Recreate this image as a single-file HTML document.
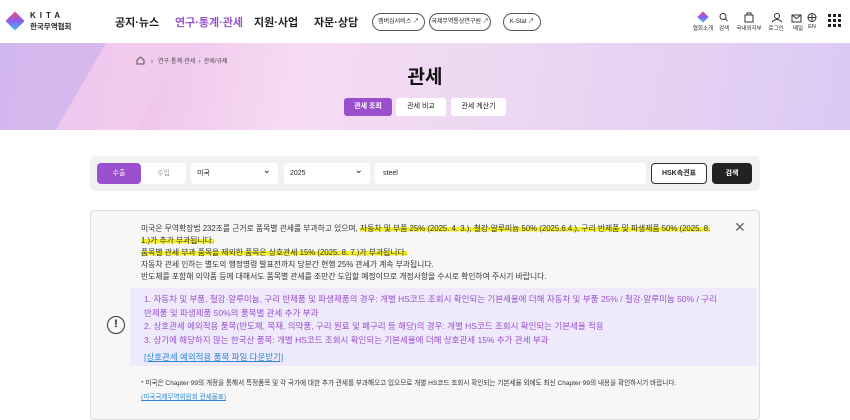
<!DOCTYPE html><html><head><meta charset="utf-8"><style>
*{margin:0;padding:0;box-sizing:border-box}
body{width:850px;height:410px;overflow:hidden;background:#fff;font-family:"Liberation Sans","Noto Sans CJK KR",sans-serif;color:#222;position:relative}
.a{position:absolute;white-space:nowrap}
.hl{background:linear-gradient(transparent 35%,#f5ef2a 35%,#f5ef2a 85%,transparent 85%)}
.pill{position:absolute;top:13px;height:18px;border:1px solid #555;border-radius:9px;font-size:6px;line-height:16px;text-align:center}
.ic{position:absolute;top:24px;font-size:5.5px;text-align:center;width:30px}
</style></head><body>
<!-- header -->
<div class="a" style="left:6px;top:12px;width:18px;height:18px;background:linear-gradient(135deg,#f34b7a,#8a5cf0 50%,#2fc6f0);transform:rotate(45deg) scale(.75)"></div>
<div class="a" style="left:30px;top:11px;font-size:8px;font-weight:bold;letter-spacing:4px">KITA</div>
<div class="a" style="left:30px;top:21px;font-size:7.5px;font-weight:bold">한국무역협회</div>
<div class="a" style="left:115px;top:14px;font-size:11px;font-weight:bold">공지·뉴스</div>
<div class="a" style="left:175px;top:14px;font-size:11px;font-weight:bold;color:#9a53cf">연구·통계·관세</div>
<div class="a" style="left:254px;top:14px;font-size:11px;font-weight:bold">지원·사업</div>
<div class="a" style="left:314px;top:14px;font-size:11px;font-weight:bold">자문·상담</div>
<div class="pill" style="left:372px;width:53px">멤버십서비스 ↗</div>
<div class="pill" style="left:429px;width:62px">국제무역통상연구원 ↗</div>
<div class="pill" style="left:503px;width:38px">K-Stat ↗</div>
<div class="a" style="left:699px;top:13px;width:8px;height:8px;background:linear-gradient(135deg,#f34b7a,#8a5cf0,#2fc6f0);transform:rotate(45deg)"></div>
<svg class="a" style="left:718px;top:12px" width="100" height="12" fill="none" stroke="#333" stroke-width="1">
<circle cx="5" cy="4.5" r="3"/><line x1="7.2" y1="6.7" x2="9.5" y2="9"/>
<rect x="27" y="3" width="8" height="7"/><path d="M29 3v-2h4v2"/>
<circle cx="59" cy="4" r="2.5"/><path d="M54 10q5-5 10 0"/>
<rect x="74" y="3" width="9" height="7"/><path d="M74 3l4.5 3.5 4.5-3.5"/>
<circle cx="94" cy="5.5" r="4"/><path d="M90 5.5h8M94 1.5v8"/></svg>
<div class="ic" style="left:688px">협회소개</div><div class="ic" style="left:709px">검색</div><div class="ic" style="left:734px">국내외지부</div><div class="ic" style="left:761px">로그인</div><div class="ic" style="left:783px">메일</div><div class="ic" style="left:797px">EN</div>
<svg class="a" style="left:828px;top:14px" width="14" height="14" fill="#222"><rect x="0" y="0" width="3" height="3"/><rect x="5" y="0" width="3" height="3"/><rect x="10" y="0" width="3" height="3"/><rect x="0" y="5" width="3" height="3"/><rect x="5" y="5" width="3" height="3"/><rect x="10" y="5" width="3" height="3"/><rect x="0" y="10" width="3" height="3"/><rect x="5" y="10" width="3" height="3"/><rect x="10" y="10" width="3" height="3"/></svg>
<!-- banner -->
<div class="a" style="left:0;top:43px;width:850px;height:87px;background:linear-gradient(100deg,#d9bdf0 0%,#f0c6ec 18%,#f6dbf2 35%,#ecd8f2 60%,#dcc9f4 100%);overflow:hidden">
<div style="position:absolute;left:-30px;top:0;width:110px;height:90px;background:#cfb3ec;transform:skewX(-30deg);opacity:.7"></div>
<div style="position:absolute;left:80px;top:0;width:80px;height:90px;background:#f3cdec;transform:skewX(-30deg);opacity:.6"></div></div>
<svg class="a" style="left:136px;top:56px" width="9" height="9" fill="none" stroke="#555"><path d="M1 4l3.5-3 3.5 3v4h-7z"/></svg>
<div class="a" style="left:151px;top:56px;font-size:6px;color:#444">›&nbsp;&nbsp; 연구·통계·관세 &nbsp;›&nbsp; 관세/규제</div>
<div class="a" style="left:380px;top:62px;width:90px;text-align:center;font-size:19px;font-weight:bold;color:#111">관세</div>
<div class="a" style="left:344px;top:98px;width:48px;height:18px;background:#9a4fcf;color:#fff;border-radius:3px;font-size:7px;line-height:18px;text-align:center;font-weight:bold">관세 조회</div>
<div class="a" style="left:396px;top:98px;width:50px;height:18px;background:#fff;border-radius:3px;font-size:7px;line-height:18px;text-align:center">관세 비교</div>
<div class="a" style="left:451px;top:98px;width:55px;height:18px;background:#fff;border-radius:3px;font-size:7px;line-height:18px;text-align:center">관세 계산기</div>
<!-- search -->
<div class="a" style="left:90px;top:156px;width:670px;height:35px;background:#f1f1f3;border-radius:5px"></div>
<div class="a" style="left:97px;top:163px;width:89px;height:21px;background:#fff;border-radius:4px"></div>
<div class="a" style="left:97px;top:163px;width:44px;height:21px;background:#9a4fcf;border-radius:4px;color:#fff;font-size:7px;line-height:21px;text-align:center">수출</div>
<div class="a" style="left:141px;top:163px;width:45px;font-size:7px;line-height:21px;text-align:center;color:#999">수입</div>
<div class="a" style="left:191px;top:163px;width:87px;height:21px;background:#fff;border-radius:3px;font-size:7px;line-height:21px;padding-left:6px">미국<span style="position:absolute;right:7px;top:-3px;font-size:10px">⌄</span></div>
<div class="a" style="left:284px;top:163px;width:86px;height:21px;background:#fff;border-radius:3px;font-size:7px;line-height:21px;padding-left:6px">2025<span style="position:absolute;right:7px;top:-3px;font-size:10px">⌄</span></div>
<div class="a" style="left:375px;top:163px;width:271px;height:21px;background:#fff;border-radius:3px;font-size:7px;line-height:21px;padding-left:8px">steel</div>
<div class="a" style="left:651px;top:163px;width:56px;height:21px;background:#fff;border:1px solid #333;border-radius:4px;font-size:7px;line-height:19px;text-align:center;font-weight:bold">HSK속견표</div>
<div class="a" style="left:712px;top:163px;width:40px;height:21px;background:#222;border-radius:4px;color:#fff;font-size:7px;line-height:21px;text-align:center;font-weight:bold">검색</div>
<!-- notice -->
<div class="a" style="left:90px;top:210px;width:670px;height:210px;background:#f7f7f8;border:1px solid #ddd;border-radius:4px"></div>
<div class="a" style="left:734px;top:219px;font-size:14px;color:#666">✕</div>
<div style="position:absolute;left:141px;top:223px;font-size:7.8px;line-height:12px;color:#333;width:600px">
<div>미국은 무역확장법 232조를 근거로 품목별 관세를 부과하고 있으며, <span class="hl">자동차 및 부품 25% (2025. 4. 3.), 철강·알루미늄 50% (2025.6.4.), 구리 반제품 및 파생제품 50% (2025. 8.</span></div>
<div><span class="hl">1.)가 추가 부과됩니다.</span></div>
<div><span class="hl">품목별 관세 부과 품목을 제외한 품목은 상호관세 15% (2025. 8. 7.)가 부과됩니다.</span></div>
<div>자동차 관세 인하는 별도의 행정명령 발표전까지 당분간 현행 25% 관세가 계속 부과됩니다.</div>
<div>반도체를 포함해 의약품 등에 대해서도 품목별 관세를 조만간 도입할 예정이므로 개정사항을 수시로 확인하여 주시기 바랍니다.</div></div>
<div class="a" style="left:130px;top:288px;width:627px;height:78px;background:#efeafb"></div>
<div style="position:absolute;left:144px;top:293px;font-size:8.5px;line-height:13.5px;color:#9a4fcf;width:610px">
<div>1. 자동차 및 부품, 철강·알루미늄, 구리 반제품 및 파생제품의 경우: 개별 HS코드 조회시 확인되는 기본세율에 더해 자동차 및 부품 25% / 철강·알루미늄 50% / 구리</div>
<div>반제품 및 파생제품 50%의 품목별 관세 추가 부과</div>
<div>2. 상호관세 예외적용 품목(반도체, 목재, 의약품, 구리 원료 및 폐구리 등 해당)의 경우: 개별 HS코드 조회시 확인되는 기본세율 적용</div>
<div>3. 상기에 해당하지 않는 한국산 품목: 개별 HS코드 조회시 확인되는 기본세율에 더해 상호관세 15% 추가 관세 부과</div>
<div style="margin-top:4px;color:#2b88d8;text-decoration:underline">[상호관세 예외적용 품목 파일 다운받기]</div></div>
<div class="a" style="left:107px;top:316px;width:18px;height:18px;border:1.5px solid #333;border-radius:50%;font-size:11px;font-weight:bold;text-align:center;line-height:15px">!</div>
<div class="a" style="left:141px;top:377px;font-size:6.6px;color:#333">* 미국은 Chapter 99의 개정을 통해서 특정품목 및 각 국가에 대한 추가 관세를 부과해오고 있으므로 개별 HS코드 조회시 확인되는 기본세율 외에도 최신 Chapter 99의 내용을 확인하시기 바랍니다.</div>
<div class="a" style="left:141px;top:391px;font-size:6.6px;color:#2b88d8;text-decoration:underline">(미국국제무역위원회 관세율표)</div>
</body></html>
